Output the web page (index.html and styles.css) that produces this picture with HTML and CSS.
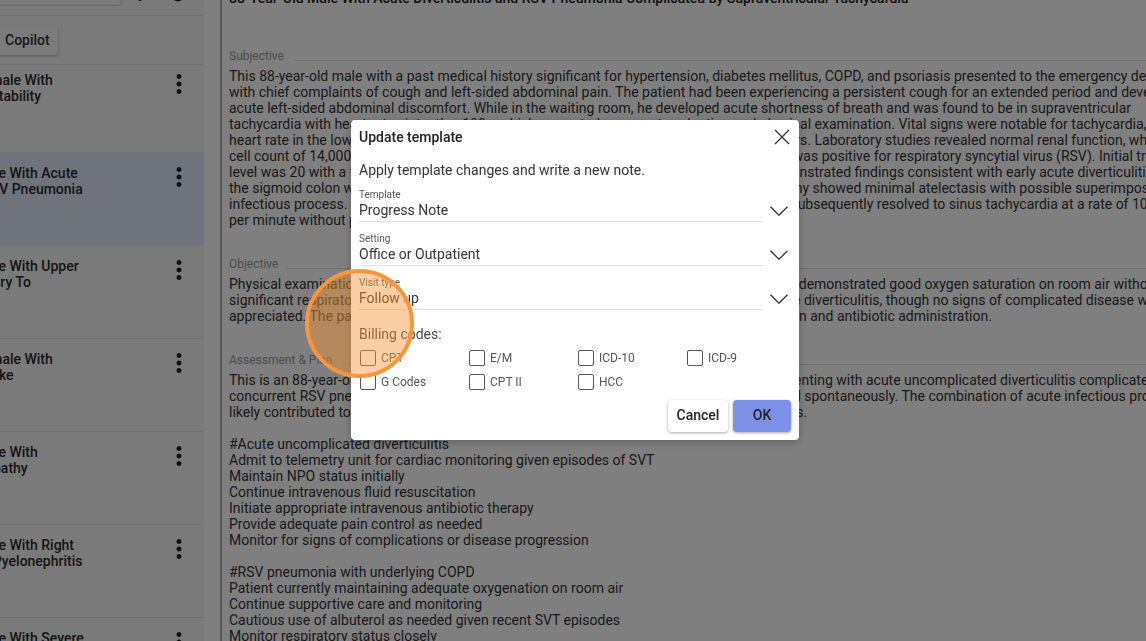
FILE: index.html
```html
<!DOCTYPE html>
<html>
<head>
    <title>Notes</title>
    <link rel="stylesheet" href="styles.css">
</head>
<body>
    <div class="page">
        <aside class="sidebar">
            <div class="search-bar">
                <div class="search-box"></div>
                <svg class="top-icon" viewBox="0 0 24 24"><circle cx="12" cy="-1" r="2"/></svg>
                <svg class="top-icon" viewBox="0 0 24 24"><circle cx="12" cy="-4.5" r="6"/></svg>
            </div>
            <div class="copilot-bar">
                <button type="button" class="copilot-btn">Copilot</button>
            </div>
            <div class="note-list">
                <div class="note-item first">
                    <div class="note-title">88-Year-Old Female With<br>Neurological Instability</div>
                    <svg class="kebab" viewBox="0 0 24 24"><path d="M12 8c1.1 0 2-.9 2-2s-.9-2-2-2-2 .9-2 2 .9 2 2 2zm0 2c-1.1 0-2 .9-2 2s.9 2 2 2 2-.9 2-2-.9-2-2-2zm0 6c-1.1 0-2 .9-2 2s.9 2 2 2 2-.9 2-2-.9-2-2-2z"/></svg>
                </div>
                <div class="note-item selected">
                    <div class="note-title">88-Year-Old Male With Acute<br>Diverticulitis, RSV Pneumonia</div>
                    <svg class="kebab" viewBox="0 0 24 24"><path d="M12 8c1.1 0 2-.9 2-2s-.9-2-2-2-2 .9-2 2 .9 2 2 2zm0 2c-1.1 0-2 .9-2 2s.9 2 2 2 2-.9 2-2-.9-2-2-2zm0 6c-1.1 0-2 .9-2 2s.9 2 2 2 2-.9 2-2-.9-2-2-2z"/></svg>
                </div>
                <div class="note-item">
                    <div class="note-title">72-Year-Old Male With Upper<br>Polyps, Secondary To</div>
                    <svg class="kebab" viewBox="0 0 24 24"><path d="M12 8c1.1 0 2-.9 2-2s-.9-2-2-2-2 .9-2 2 .9 2 2 2zm0 2c-1.1 0-2 .9-2 2s.9 2 2 2 2-.9 2-2-.9-2-2-2zm0 6c-1.1 0-2 .9-2 2s.9 2 2 2 2-.9 2-2-.9-2-2-2z"/></svg>
                </div>
                <div class="note-item">
                    <div class="note-title">65-Year-Old Female With<br>Thrombotic Stroke</div>
                    <svg class="kebab" viewBox="0 0 24 24"><path d="M12 8c1.1 0 2-.9 2-2s-.9-2-2-2-2 .9-2 2 .9 2 2 2zm0 2c-1.1 0-2 .9-2 2s.9 2 2 2 2-.9 2-2-.9-2-2-2zm0 6c-1.1 0-2 .9-2 2s.9 2 2 2 2-.9 2-2-.9-2-2-2z"/></svg>
                </div>
                <div class="note-item">
                    <div class="note-title">79-Year-Old Male With<br>Mild Encephalopathy</div>
                    <svg class="kebab" viewBox="0 0 24 24"><path d="M12 8c1.1 0 2-.9 2-2s-.9-2-2-2-2 .9-2 2 .9 2 2 2zm0 2c-1.1 0-2 .9-2 2s.9 2 2 2 2-.9 2-2-.9-2-2-2zm0 6c-1.1 0-2 .9-2 2s.9 2 2 2 2-.9 2-2-.9-2-2-2z"/></svg>
                </div>
                <div class="note-item">
                    <div class="note-title">58-Year-Old Male With Right<br>Ureteral Stone, Pyelonephritis</div>
                    <svg class="kebab" viewBox="0 0 24 24"><path d="M12 8c1.1 0 2-.9 2-2s-.9-2-2-2-2 .9-2 2 .9 2 2 2zm0 2c-1.1 0-2 .9-2 2s.9 2 2 2 2-.9 2-2-.9-2-2-2zm0 6c-1.1 0-2 .9-2 2s.9 2 2 2 2-.9 2-2-.9-2-2-2z"/></svg>
                </div>
                <div class="note-item">
                    <div class="note-title">84-Year-Old Male With Severe<br>Sepsis</div>
                    <svg class="kebab" viewBox="0 0 24 24"><path d="M12 8c1.1 0 2-.9 2-2s-.9-2-2-2-2 .9-2 2 .9 2 2 2zm0 2c-1.1 0-2 .9-2 2s.9 2 2 2 2-.9 2-2-.9-2-2-2zm0 6c-1.1 0-2 .9-2 2s.9 2 2 2 2-.9 2-2-.9-2-2-2z"/></svg>
                </div>
            </div>
        </aside>

        <main class="note">
            <div class="note-heading">88-Year-Old Male With Acute Diverticulitis and RSV Pneumonia Complicated by Supraventricular Tachycardia</div>

            <div class="section-label first">Subjective</div>
            <p class="note-text">This 88-year-old male with a past medical history significant for hypertension, diabetes mellitus, COPD, and psoriasis presented to the emergency department
with chief complaints of cough and left-sided abdominal pain. The patient had been experiencing a persistent cough for an extended period and developed
acute left-sided abdominal discomfort. While in the waiting room, he developed acute shortness of breath and was found to be in supraventricular
tachycardia with heart rates into  the  180s, which prompted an urgent evaluation and physical examination. Vital signs were notable for tachycardia, with
heart rate in the low 100s after treatment and mild tachypnea without any documented fevers. Laboratory studies revealed normal renal function, white blood
cell count of 14,000 with a marked left shift, mild anemia, and normal lactate.  A viral panel was positive for respiratory syncytial virus (RSV). Initial troponin
level was 20 with a flat trend on serial testing. The CT scan of the abdomen and pelvis demonstrated findings consistent with early acute diverticulitis involving
the sigmoid colon without any evidence of abscess or perforation. Portable chest radiography showed minimal atelectasis with possible superimposed
infectious process. After long observation, the patient's initial supraventricular tachycardia subsequently resolved to sinus tachycardia at a rate of 109 beats
per minute without pharmacologic intervention.</p>

            <div class="section-label">Objective</div>
            <p class="note-text">Physical examination revealed an elderly, frail male in no acute respiratory distress and who demonstrated good oxygen saturation on room air without
significant respiratory distress. Abdominal imaging supported the clinical diagnosis of acute diverticulitis, though no signs of complicated disease were
appreciated. The patient  stayed  hemodynamically stable with ongoing intravenous hydration and antibiotic administration.</p>

            <div class="section-label">Assessment &amp; Plan</div>
            <p class="note-text">This is an 88-year-old male with multiple significant, active, chronic medical  problems, presenting with acute uncomplicated diverticulitis complicated by
concurrent RSV pneumonia and a brief self-limited episode of SVT that then quickly resolved spontaneously. The combination of acute infectious processes
likely contributed to his arrhythmia, acute  shortness  of breath and his presenting symptoms.

#Acute uncomplicated diverticulitis
Admit to telemetry unit for cardiac monitoring given episodes of SVT
Maintain NPO status initially
Continue intravenous fluid resuscitation
Initiate appropriate intravenous antibiotic therapy
Provide adequate pain control as needed
Monitor for signs of complications or disease progression

#RSV pneumonia with underlying COPD
Patient currently maintaining adequate oxygenation on room air
Continue supportive care and monitoring
Cautious use of albuterol as needed given recent SVT episodes
Monitor respiratory status closely</p>
        </main>
    </div>

    <div class="overlay"></div>

    <div class="dialog">
        <div class="dialog-head">
            <span class="dialog-title">Update template</span>
            <svg class="close-icon" viewBox="0 0 16 16"><path d="M1 1l14 14M15 1L1 15"/></svg>
        </div>
        <div class="dialog-intro">Apply template changes and write a new note.</div>

        <div class="select-row">
            <div class="select-field">
                <label>Template</label>
                <div class="select-value">Progress Note</div>
            </div>
            <svg class="chevron" viewBox="0 0 18 10"><path d="M.5 .8L9 9.2L17.5 .8"/></svg>
        </div>
        <div class="select-row">
            <div class="select-field">
                <label>Setting</label>
                <div class="select-value">Office or Outpatient</div>
            </div>
            <svg class="chevron" viewBox="0 0 18 10"><path d="M.5 .8L9 9.2L17.5 .8"/></svg>
        </div>
        <div class="select-row">
            <div class="select-field">
                <label>Visit type</label>
                <div class="select-value">Follow up</div>
            </div>
            <svg class="chevron" viewBox="0 0 18 10"><path d="M.5 .8L9 9.2L17.5 .8"/></svg>
        </div>

        <div class="billing-title">Billing codes:</div>
        <div class="billing-grid">
            <div class="code"><span class="check"></span>CPT</div>
            <div class="code"><span class="check"></span>E/M</div>
            <div class="code"><span class="check"></span>ICD-10</div>
            <div class="code"><span class="check"></span>ICD-9</div>
            <div class="code"><span class="check"></span>G Codes</div>
            <div class="code"><span class="check"></span>CPT II</div>
            <div class="code"><span class="check"></span>HCC</div>
        </div>

        <div class="dialog-actions">
            <button type="button" class="btn-cancel">Cancel</button>
            <button type="button" class="btn-ok">OK</button>
        </div>
    </div>

    <div class="click-ring"></div>
</body>
</html>
```

FILE: styles.css
```css
html, body {
    margin: 0;
    height: 100%;
    overflow: hidden;
}

body {
    font-family: Roboto, "Liberation Sans", sans-serif;
    font-size: 14px;
    color: #222;
    background-color: #fff;
}

.page {
    display: flex;
    height: 641px;
    overflow: hidden;
}

.sidebar {
    width: 204px;
    flex: none;
    overflow: hidden;
    background-color: #f5f5f5;
}

.search-bar {
    height: 16px;
    box-sizing: border-box;
    display: flex;
    border-bottom: 1px solid #e4e4e4;
    overflow: hidden;
}

.search-box {
    width: 122px;
    height: 6px;
    flex: none;
    box-sizing: border-box;
    border: 1px solid #ccc;
    border-top: none;
    border-left: none;
    border-radius: 0 0 5px 0;
}

.top-icon {
    width: 24px;
    height: 24px;
    margin-left: 6px;
    overflow: visible;
    fill: #222;
}

.top-icon + .top-icon {
    margin-left: 14px;
}

.copilot-bar {
    height: 49px;
    box-sizing: border-box;
    padding-top: 9px;
    border-bottom: 1px solid #e4e4e4;
}

.copilot-btn {
    display: block;
    width: 80px;
    height: 30px;
    margin-left: -22px;
    padding: 0 0 0 27px;
    border: none;
    border-radius: 4px;
    font-family: inherit;
    font-size: 14px;
    font-weight: 500;
    color: #333;
    text-align: left;
    background-color: #f7f7f7;
    box-shadow: 0 1px 3px rgba(0,0,0,0.3);
}

.note-item {
    height: 93px;
    box-sizing: border-box;
    padding: 12px 10px 0 0;
    display: flex;
    justify-content: space-between;
    border-bottom: 1px solid #e4e4e4;
}

.note-item.first {
    height: 88px;
    padding-top: 7px;
}

.note-item.selected {
    background-color: #dfe7f8;
}

.note-title {
    margin-left: -103px;
    font-weight: 500;
    line-height: 16px;
    white-space: nowrap;
    color: #2a2a2a;
}

.kebab {
    width: 30px;
    height: 30px;
    margin-top: -3px;
    flex: none;
    fill: #222;
}

.note {
    flex: 1;
    min-width: 0;
    margin-left: 16px;
    padding: 0 0 0 7px;
    border-left: 2px solid #aaa;
    overflow: hidden;
}

.note-heading {
    margin-top: -10px;
    font-weight: 500;
    line-height: 16px;
    white-space: nowrap;
}

.section-label {
    display: flex;
    margin-top: 28px;
    font-size: 12px;
    line-height: 16px;
    color: #999;
}

.section-label.first {
    margin-top: 42px;
}

.section-label::after {
    content: "";
    flex: 1;
    height: 1px;
    margin: 12px 0 0 9px;
    background-color: #e0e0e0;
}

.note-text {
    margin: 4px 0 0 0;
    line-height: 16px;
    white-space: pre;
    color: #333;
}

.overlay {
    position: fixed;
    inset: 0;
    background-color: rgba(0,0,0,0.5);
}

.dialog {
    position: fixed;
    left: 351px;
    top: 120px;
    width: 448px;
    height: 320px;
    box-sizing: border-box;
    padding: 0 8px;
    background-color: #fff;
    border-radius: 4px;
    box-shadow: 0 2px 8px rgba(0,0,0,0.25);
}

.dialog-head {
    display: flex;
    justify-content: space-between;
    align-items: center;
    height: 34px;
}

.dialog-title {
    font-weight: 500;
    color: #222;
}

.close-icon {
    width: 16px;
    height: 16px;
    margin-right: 1px;
    fill: none;
    stroke: #333;
    stroke-width: 1.3;
}

.dialog-intro {
    margin-top: 8px;
    line-height: 16px;
    color: #333;
}

.select-row {
    display: flex;
    align-items: flex-end;
    margin-top: 8px;
}

.select-field {
    width: 404px;
    height: 36px;
    box-sizing: border-box;
    padding-top: 3px;
    border-bottom: 1px solid #e2e2e2;
}

.select-field label {
    display: block;
    font-size: 10px;
    line-height: 12px;
    color: #555;
}

.select-value {
    line-height: 18px;
    color: #333;
}

.chevron {
    width: 18px;
    height: 10px;
    margin: 0 0 6px 7px;
    fill: none;
    stroke: #333;
    stroke-width: 1.3;
}

.billing-title {
    margin-top: 16px;
    line-height: 16px;
    color: #444;
}

.billing-grid {
    display: grid;
    grid-template-columns: repeat(4, 109px);
    grid-auto-rows: 24px;
    margin-top: 4px;
}

.code {
    display: flex;
    align-items: center;
    font-size: 12px;
    color: #555;
}

.check {
    width: 16px;
    height: 16px;
    box-sizing: border-box;
    margin: 0 5px 0 1px;
    border: 1.5px solid #555;
    border-radius: 2px;
}

.dialog-actions {
    display: flex;
    justify-content: flex-end;
    gap: 5px;
    margin: 6px 0 0 0;
}

.dialog-actions button {
    height: 32px;
    padding: 0 0 2px 0;
    border: none;
    border-radius: 4px;
    font-family: inherit;
    font-size: 14px;
    font-weight: 500;
    color: #222;
    box-shadow: 0 1px 3px rgba(0,0,0,0.35);
}

.btn-cancel {
    width: 60px;
    background-color: #fff;
}

.btn-ok {
    width: 58px;
    background-color: #7b90e6;
}

.click-ring {
    position: fixed;
    left: 305px;
    top: 269px;
    width: 109px;
    height: 109px;
    box-sizing: border-box;
    border: 4px solid #f7963c;
    border-radius: 50%;
    background-color: rgba(247,148,50,0.45);
}
```
